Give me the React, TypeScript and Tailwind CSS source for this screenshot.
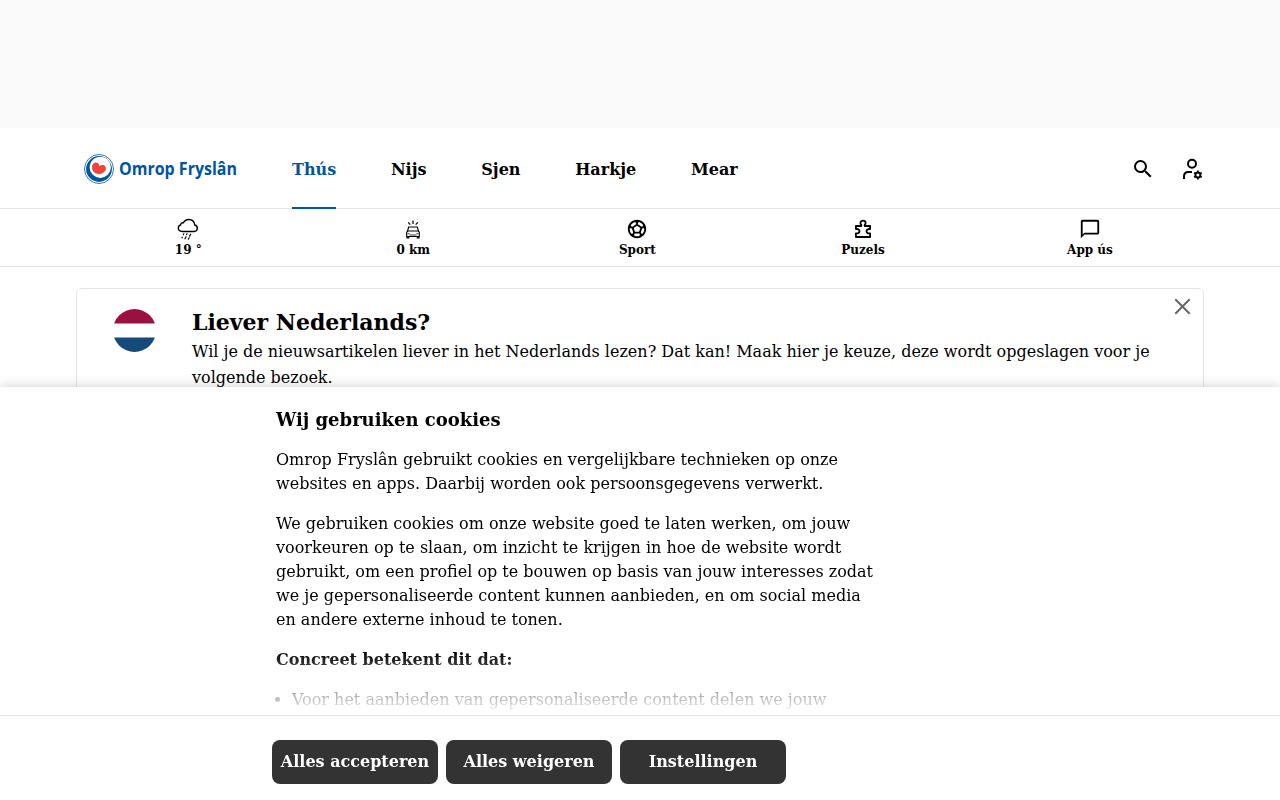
import type { ReactNode } from 'react';
import { MdChatBubbleOutline, MdOutlineSportsSoccer, MdSearch } from 'react-icons/md';

interface QuickLink {
  label: string;
  icon: ReactNode;
}

const navItems = ['Thús', 'Nijs', 'Sjen', 'Harkje', 'Mear'];

const quickLinks: QuickLink[] = [
  { label: '19 °', icon: <RainIcon /> },
  { label: '0 km', icon: <TrafficIcon /> },
  { label: 'Sport', icon: <MdOutlineSportsSoccer className="size-[22px]" /> },
  { label: 'Puzels', icon: <PuzzleIcon /> },
  { label: 'App ús', icon: <MdChatBubbleOutline className="size-[22px]" /> },
];

const cookieActions = ['Alles accepteren', 'Alles weigeren', 'Instellingen'];

function Logo() {
  return (
    <svg width="156" height="32" viewBox="0 0 156 32" className="shrink-0 overflow-visible">
      <circle cx="16" cy="16" r="14.500" fill="none" stroke="#0055a0" strokeWidth="0.800" />
      <circle cx="16" cy="16" r="12.900" fill="#0055a0" />
      <circle cx="17.300" cy="14.300" r="10.600" fill="#fff" />
      <path
        d="M16.300 13.300c1.700-1.700 4.600-1.800 5.900-.1 1.300 1.800.8 4-.6 5.400-1.700 1.700-3.300 2.700-6.100 2.500-3.700-.2-6.200-2.900-6.400-6-.2-3.200 1.400-5.500 3.800-5.500 2.200 0 3.300 1.600 3.400 3.700z"
        fill="#f04438"
      />
      <text
        x="36"
        y="21.500"
        textLength="118"
        lengthAdjust="spacingAndGlyphs"
        fill="#0055a0"
        className="font-['Open_Sans',sans-serif] text-[17px] font-bold"
      >
        Omrop Fryslân
      </text>
    </svg>
  );
}

function RainIcon() {
  return (
    <svg width="22" height="22" viewBox="0 0 22 22" fill="none" stroke="currentColor" strokeLinecap="round">
      <path
        d="M5.300 13.500h12a3.300 3.300 0 0 0 .5-6.500C17.300 3.600 14.900 1.500 11.900 1.500 9.300 1.500 7.400 2.700 6.400 4.800c-1.800-.2-2.700.7-2.800 2.200C2.100 7.400 1.300 8.600 1.300 10.100c0 2.100 1.800 3.400 4 3.400z"
        strokeWidth="1.400"
      />
      <path d="M6.800 15.800l-.5 1M10 15.800l-.4.900M13.600 16.200l-1 1.900M5.300 19.200l-.3.600M9 18.800l-1 2M12.100 19.700l-.8 1.500" strokeWidth="1.200" />
    </svg>
  );
}

function TrafficIcon() {
  return (
    <svg width="22" height="22" viewBox="0 0 22 22" fill="none" stroke="currentColor">
      <path d="M11 2.500v3.500M6.200 4.300l2.100 2.300M15.800 4.300l-2.100 2.300" strokeWidth="1.200" />
      <path d="M5.500 13l1.200-4h8.600l1.200 4M4.700 18.500V14l1.200-1h10.200l1.200 1v4.500zM5 18.500v1.400h1.700v-1.400M15.300 18.500v1.400H17v-1.400" strokeWidth="1.100" />
      <path d="M5.500 15.700h2M14.500 15.700h2M7.500 17h7" strokeWidth="0.800" />
    </svg>
  );
}

function PuzzleIcon() {
  return (
    <svg width="22" height="22" viewBox="0 0 22 22" fill="none" stroke="currentColor" strokeWidth="1.800" strokeLinejoin="round">
      <path d="M3.900 8h5.400V6.800c-.6-.4-.9-1-.9-1.700C8.400 3.600 9.500 2.700 11 2.700s2.600.9 2.600 2.400c0 .7-.3 1.300-.9 1.700V8h5.400v3.100c-2.300-.4-3.600.6-3.600 2.100s1.300 2.500 3.600 2.100V19H3.900v-3.700c2.300.4 3.600-.6 3.600-2.100s-1.300-2.500-3.600-2.100z" />
    </svg>
  );
}

function AccountIcon() {
  return (
    <svg width="24" height="24" viewBox="0 0 24 24" fill="none" stroke="currentColor">
      <circle cx="12" cy="6.800" r="4" strokeWidth="2" />
      <path d="M4 22v-2.500C4 16.800 5.500 15 8.200 15H12" strokeWidth="2" />
      <circle cx="17.900" cy="18" r="2.500" strokeWidth="1.900" />
      <path d="M17.900 13.600v1.700M17.900 20.700v1.700M14.100 15.800l1.400.8M20.300 19.400l1.400.8M14.100 20.200l1.400-.8M20.300 16.600l1.400-.8" strokeWidth="1.800" />
    </svg>
  );
}

function DutchFlag() {
  return (
    <svg width="43" height="43" viewBox="0 0 43 43" className="shrink-0">
      <clipPath id="flag-circle">
        <circle cx="21.500" cy="21.500" r="21.500" />
      </clipPath>
      <g clipPath="url(#flag-circle)">
        <path d="M0 0h43v14.500H0z" fill="#9c1040" />
        <path d="M0 28.500h43V43H0z" fill="#154b7a" />
      </g>
    </svg>
  );
}

function Header() {
  return (
    <header className="h-[81px] border-b border-[#e5e5e5]">
      <div className="mx-auto flex h-[81px] w-[1128px] items-center pl-[7px]">
        <Logo />
        <nav className="ml-[53px] flex h-full gap-[54.8px]">
          {navItems.map((item, index) => (
            <a
              key={item}
              href="#"
              className={
                index === 0
                  ? 'flex items-center border-b-2 border-[#0055a0] pt-[4px] font-bold text-[#0055a0]'
                  : 'flex items-center border-b-2 border-transparent pt-[4px] font-bold'
              }
            >
              {item}
            </a>
          ))}
        </nav>
        <div className="ml-auto flex items-center gap-[25px] pt-px">
          <button aria-label="Sykje">
            <MdSearch className="size-6" />
          </button>
          <button aria-label="Account">
            <AccountIcon />
          </button>
        </div>
      </div>
    </header>
  );
}

function QuickLinks() {
  return (
    <div className="h-[58px] border-b border-[#e5e5e5]">
      <div className="mx-auto grid w-[1128px] grid-cols-[224.6px_225.2px_223.2px_228px_226px] pt-[9px]">
        {quickLinks.map(({ label, icon }) => (
          <a key={label} href="#" className="flex flex-col items-center text-xs font-bold">
            {icon}
            <span className="mt-0.5">{label}</span>
          </a>
        ))}
      </div>
    </div>
  );
}

function LanguageCard() {
  return (
    <section className="mx-auto mt-[21px] flex h-[180px] w-[1128px] rounded-md border border-[#e5e5e5] pt-5 pl-9">
      <DutchFlag />
      <div className="ml-9 w-[970px]">
        <h2 className="-mt-0.5 text-[22px] leading-[30px] font-bold">Liever Nederlands?</h2>
        <p className="mt-0.5 leading-[26px]">
          Wil je de nieuwsartikelen liever in het Nederlands lezen? Dat kan! Maak hier je keuze, deze wordt
          opgeslagen voor je volgende bezoek.
        </p>
      </div>
      <button aria-label="Slute" className="-mt-[11px] ml-3 size-4 text-[#666]">
        <svg width="17" height="17" viewBox="0 0 17 17" fill="none" stroke="currentColor" strokeWidth="2">
          <path d="M1.300 1.300l14.400 14.400M15.700 1.300L1.300 15.700" />
        </svg>
      </button>
    </section>
  );
}

function CookieBanner() {
  return (
    <div className="fixed inset-x-0 bottom-0 h-[413px] bg-white shadow-[0_0_12px_rgba(0,0,0,0.2)]">
      <div className="relative h-[328px] overflow-hidden">
        <div className="ml-[276px] w-[600px] space-y-4 pt-[21px]">
          <h2 className="text-lg leading-6 font-bold">Wij gebruiken cookies</h2>
          <p>
            Omrop Fryslân gebruikt cookies en vergelijkbare technieken op onze websites en apps. Daarbij worden ook
            persoonsgegevens verwerkt.
          </p>
          <p>
            We gebruiken cookies om onze website goed te laten werken, om jouw voorkeuren op te slaan, om inzicht te
            krijgen in hoe de website wordt gebruikt, om een profiel op te bouwen op basis van jouw interesses zodat
            we je gepersonaliseerde content kunnen aanbieden, en om social media en andere externe inhoud te tonen.
          </p>
          <p className="font-bold">Concreet betekent dit dat:</p>
          <ul className="list-disc pl-4">
            <li>Voor het aanbieden van gepersonaliseerde content delen we jouw</li>
          </ul>
        </div>
        <div className="absolute inset-x-0 bottom-0 h-16 bg-linear-to-b from-white/0 to-white" />
      </div>
      <div className="flex h-[85px] gap-2 border-t border-[#e5e5e5] pt-6 pl-[272px]">
        {cookieActions.map((action) => (
          <button key={action} className="h-11 w-[166px] rounded-lg bg-[#333] font-bold whitespace-nowrap text-white">
            {action}
          </button>
        ))}
      </div>
    </div>
  );
}

export default function App() {
  return (
    <div className="h-[800px] overflow-hidden bg-white font-['DejaVu_Serif',serif] text-base text-black">
      <div className="h-32 bg-[#fafafa]" />
      <Header />
      <QuickLinks />
      <LanguageCard />
      <CookieBanner />
    </div>
  );
}
